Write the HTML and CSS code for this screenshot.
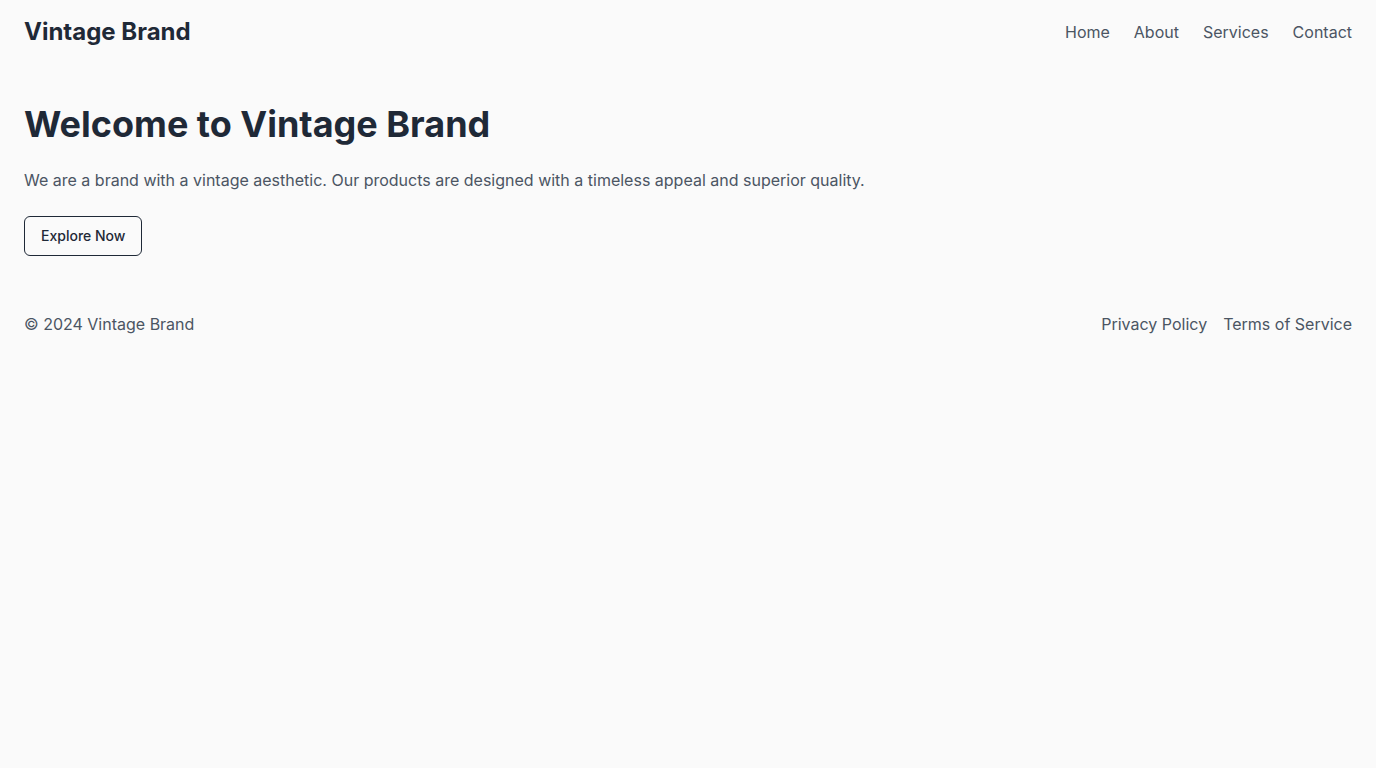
FILE: index.html
```html
<!DOCTYPE html>
<html lang="en">
<head>
<meta charset="utf-8">
<title>Vintage Brand</title>
<link rel="stylesheet" href="styles.css">
</head>
<body>
<header class="header">
  <div class="brand">Vintage Brand</div>
  <nav class="nav">
    <a href="#">Home</a>
    <a href="#">About</a>
    <a href="#">Services</a>
    <a href="#">Contact</a>
  </nav>
</header>
<main class="main">
  <h1 class="title">Welcome to Vintage Brand</h1>
  <p class="lead">We are a brand with a vintage aesthetic. Our products are designed with a timeless appeal and superior quality.</p>
  <button class="btn">Explore Now</button>
</main>
<footer class="footer">
  <div class="copy">© 2024 Vintage Brand</div>
  <nav class="footer-links">
    <a href="#">Privacy Policy</a>
    <a href="#">Terms of Service</a>
  </nav>
</footer>
</body>
</html>
```

FILE: styles.css
```css
* { box-sizing: border-box; }
html, body { margin: 0; padding: 0; }
body {
  background: #fafafa;
  font-family: Inter, "Noto Sans", sans-serif;
  color: #1f2937;
}
a { text-decoration: none; color: inherit; }
.header {
  display: flex;
  justify-content: space-between;
  align-items: center;
  padding: 16px 24px;
}
.brand {
  font-size: 24px;
  line-height: 32px;
  font-weight: 700;
  color: #1f2937;
}
.nav {
  display: flex;
  gap: 24px;
  font-size: 16px;
  line-height: 24px;
  color: #4b5563;
}
.main {
  padding: 40px 24px;
}
.title {
  margin: 0 0 24px;
  font-size: 36px;
  line-height: 40px;
  font-weight: 700;
  color: #1f2937;
}
.lead {
  margin: 0 0 24px;
  font-size: 16px;
  line-height: 24px;
  color: #4b5563;
}
.btn {
  font-family: inherit;
  font-size: 14px;
  line-height: 20px;
  font-weight: 500;
  color: #1f2937;
  background: transparent;
  border: 1px solid #1f2937;
  border-radius: 6px;
  padding: 9px 16px;
}
.footer {
  display: flex;
  justify-content: space-between;
  align-items: center;
  padding: 16px 24px;
  font-size: 16px;
  line-height: 24px;
  color: #4b5563;
}
.footer-links {
  display: flex;
  gap: 16px;
}
```
